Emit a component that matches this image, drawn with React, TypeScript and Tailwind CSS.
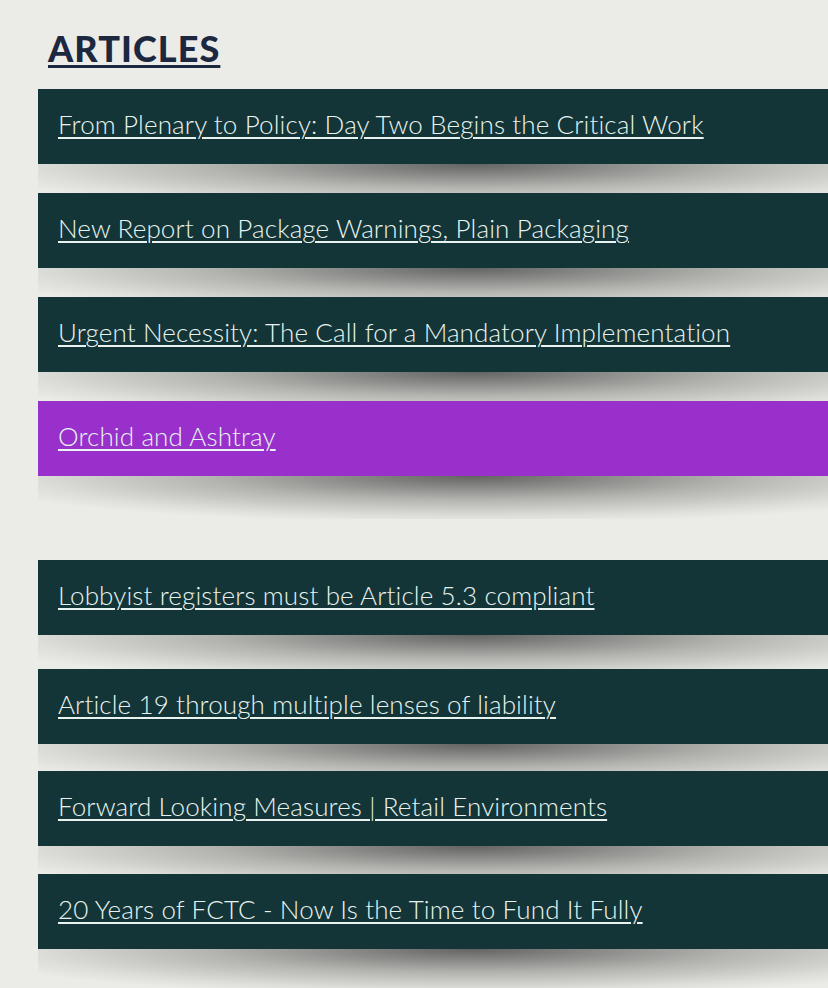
import React from "react";

const items: { title: string; purple?: boolean; mt: string }[] = [
  { title: "From Plenary to Policy: Day Two Begins the Critical Work", mt: "" },
  { title: "New Report on Package Warnings, Plain Packaging", mt: "mt-[29px]" },
  { title: "Urgent Necessity: The Call for a Mandatory Implementation", mt: "mt-[29px]" },
  { title: "Orchid and Ashtray", purple: true, mt: "mt-[29px]" },
  { title: "Lobbyist registers must be Article 5.3 compliant", mt: "mt-[84px]" },
  { title: "Article 19 through multiple lenses of liability", mt: "mt-[34px]" },
  { title: "Forward Looking Measures | Retail Environments", mt: "mt-[27px]" },
  { title: "20 Years of FCTC - Now Is the Time to Fund It Fully", mt: "mt-[28px]" },
];

export default function App() {
  return (
    <div className="min-h-[988px] w-[828px] overflow-hidden bg-[#ebebe7] pt-[28px] font-['Lato',sans-serif]">
      <h2 className="ml-[48px] text-[36px] font-black leading-[40px] tracking-[0.03em] text-[#1c2740] underline decoration-[3px] underline-offset-[3px]">
        ARTICLES
      </h2>
      <div className="mt-[21px] ml-[38px] flex flex-col">
        {items.map((it, i) => (
          <div
            key={i}
            className={`relative flex h-[75px] items-center pb-[5px] pl-[20px] ${
              it.purple ? "bg-[#9930cc]" : "bg-[#143538]"
            } ${it.mt}`}
          >
            <div className="pointer-events-none absolute left-0 right-0 top-full h-[43px] bg-[radial-gradient(ellipse_66%_110%_at_55%_0%,rgba(0,0,0,0.58),rgba(0,0,0,0.24)_50%,rgba(0,0,0,0.06)_85%,rgba(0,0,0,0)_100%)]" />
            <a
              href="#"
              className="text-[26px] font-light leading-[30px] tracking-[0.005em] text-[#e8f3ef] underline decoration-[1.5px] underline-offset-[3px]"
            >
              {it.title}
            </a>
          </div>
        ))}
      </div>
    </div>
  );
}
